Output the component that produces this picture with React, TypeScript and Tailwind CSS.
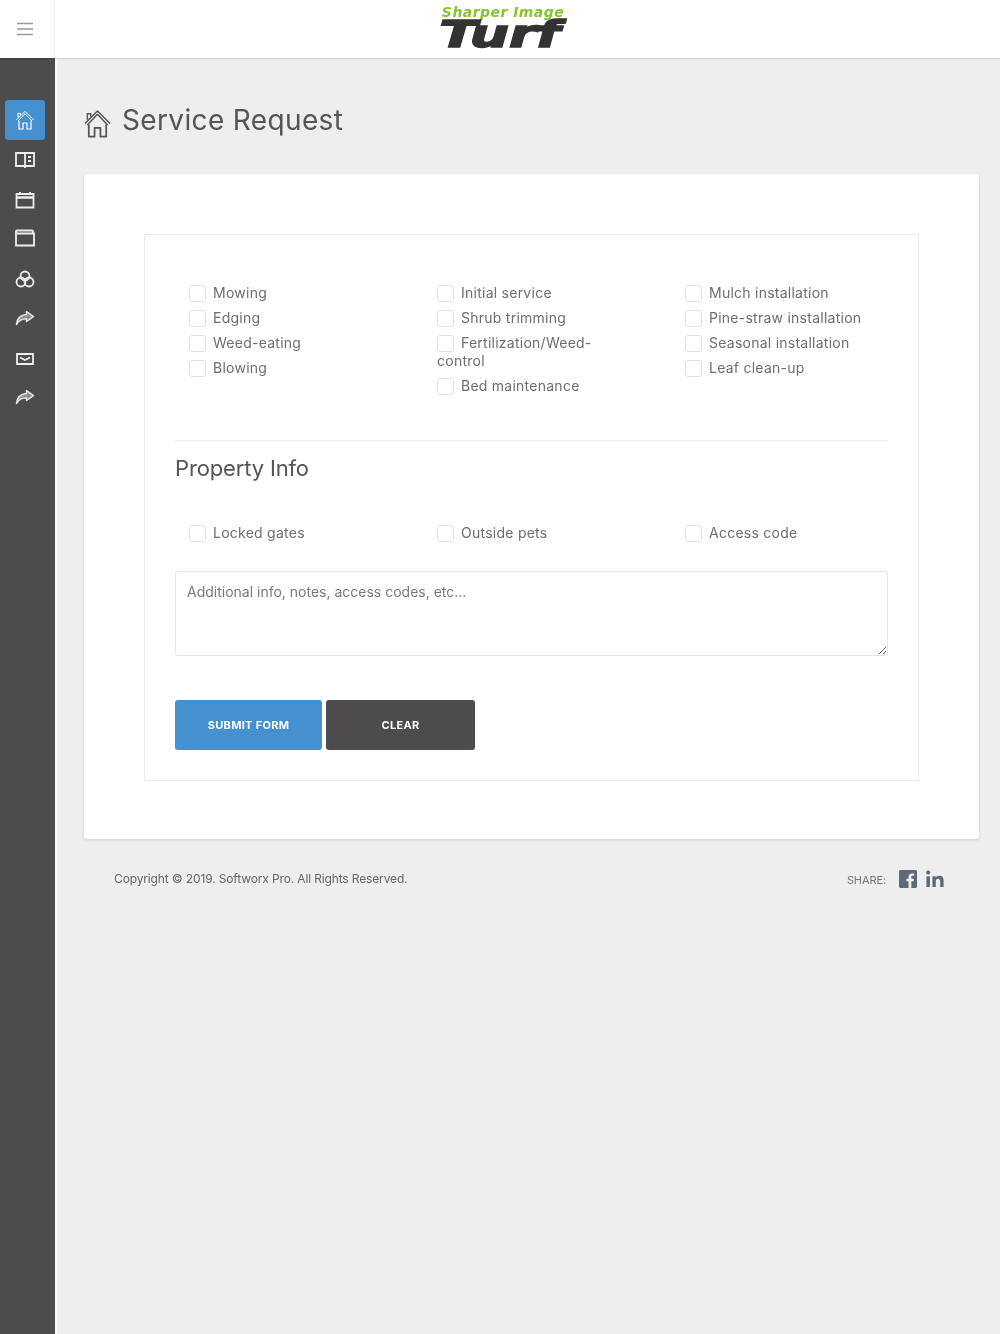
import React from 'react';

const columns = [
  ['Mowing', 'Edging', 'Weed-eating', 'Blowing'],
  ['Initial service', 'Shrub trimming', 'Fertilization/Weed-control', 'Bed maintenance'],
  ['Mulch installation', 'Pine-straw installation', 'Seasonal installation', 'Leaf clean-up'],
];

const propertyOptions = ['Locked gates', 'Outside pets', 'Access code'];

function Check({ label }: { label: string }) {
  return (
    <label className="block text-[14px] leading-[18px] text-[#6f6d6d] tracking-[0.25px] mb-[7px]">
      <span className="inline-block w-[17px] h-[17px] rounded-[3px] border border-[#dfe2e6] bg-white align-[-4px] mr-[7px]" />
      {label.includes('/') ? (
        <>
          Fertilization/Weed-
          <br />
          control
        </>
      ) : (
        label
      )}
    </label>
  );
}

function HomeIcon({ size, color }: { size: number; color: string }) {
  return (
    <svg width={size} height={size} viewBox="0 0 28 30" fill="none" stroke={color} strokeWidth="1.5" strokeLinejoin="round">
      <path d="M1 15 14 2l13 13" />
      <path d="M3.500 16.500 14 5.500l10.500 11" />
      <path d="M5 16v12.500h6v-9h6v9h6V16" strokeWidth="1.800" />
      <path d="M3.500 11V5h3.500v3" />
    </svg>
  );
}

function ShareIcon() {
  return (
    <svg width="20" height="16" viewBox="0 0 20 16" fill="#8f8e8e" stroke="#e8e8e8" strokeWidth="1.500" strokeLinejoin="round">
      <path d="M11.500 1.500 18.500 6.600 11.500 11.500V8.800C6.800 8.800 3.800 10.400 1.500 14.500c.4-5.700 4-9.500 10-10z" />
    </svg>
  );
}

function SideIcons() {
  const stroke = '#eeeeee';
  return (
    <nav className="flex flex-col items-center pt-[42px] w-[50px]">
      <div className="w-[40px] h-[40px] rounded-[3px] bg-[#4590cf] flex items-center justify-center">
        <HomeIcon size={20} color="#ffffff" />
      </div>
      <div className="h-[40px] flex items-center">
        <svg width="20" height="18" viewBox="0 0 20 18" fill="none" stroke={stroke} strokeWidth="1.800">
          <path d="M1 2h18v13H1z" />
          <path d="M10 2v15M13 6h3M13 10h3" />
        </svg>
      </div>
      <div className="h-[40px] flex items-center">
        <svg width="20" height="18" viewBox="0 0 20 18" fill="none" stroke={stroke} strokeWidth="1.800">
          <path d="M1.500 3h17v13.500h-17z" />
          <path d="M1.500 6.500h17" strokeWidth="2.500" />
          <path d="M5 1v2M15 1v2" />
        </svg>
      </div>
      <div className="h-[36px] flex items-center">
        <svg width="20" height="18" viewBox="0 0 20 18" fill="none" stroke={stroke} strokeWidth="1.800">
          <path d="M1 4.500V2.500q0-1 1-1h15q1 0 1 1v2" />
          <path d="M1 4.500h18v12H1z" />
        </svg>
      </div>
      <div className="h-[46px] flex items-center">
        <svg width="20" height="18" viewBox="0 0 20 18" fill="none" stroke={stroke} strokeWidth="1.800">
          <circle cx="10" cy="6" r="4.500" />
          <circle cx="6" cy="12" r="4.500" />
          <circle cx="14" cy="12" r="4.500" />
        </svg>
      </div>
      <div className="h-[32px] flex items-center">
        <ShareIcon />
      </div>
      <div className="h-[50px] flex items-center">
        <svg width="18" height="12" viewBox="0 0 18 12" fill="none" stroke={stroke} strokeWidth="1.800">
          <path d="M1 1h16v10H1z" />
          <path d="M4 4.500 9 7l5-2.500" />
        </svg>
      </div>
      <div className="h-[26px] flex items-center">
        <ShareIcon />
      </div>
    </nav>
  );
}

export default function App() {
  return (
    <div className="min-h-[1334px] flex flex-col bg-[#eeeeee] font-['Inter',sans-serif] blur-[0.4px]">
      <header className="h-[58px] flex bg-white shadow-[0_1px_2px_rgba(0,0,0,0.14)] relative">
        <div className="w-[55px] border-r border-[#e9edf2] flex items-center justify-center pr-[5px]">
          <svg width="16" height="14" viewBox="0 0 16 14" stroke="#9a9a9a" strokeWidth="1.600">
            <path d="M0 1.500h16M0 7h16M0 12.500h16" />
          </svg>
        </div>
        <div className="flex-1 flex justify-center pr-[49px]">
          <div className="flex flex-col items-center italic font-bold select-none font-['DejaVu_Sans',sans-serif]">
            <span className="text-[#86c52c] text-[14px] leading-[12px] mt-[6px] tracking-[0.45px]">
              Sharper Image
            </span>
            <span className="text-[#333333] text-[38px] leading-[30px] mt-[1px] -ml-[6px] scale-x-[1.45] [-webkit-text-stroke:1.5px_#333333]">
              Turf
            </span>
          </div>
        </div>
      </header>

      <div className="flex-1 flex">
        <aside className="w-[57px] pr-[2px] shrink-0 bg-[#4d4b4b] border-r-2 border-[#fafafa]">
          <SideIcons />
        </aside>
        <main className="flex-1 min-w-0 pl-[27px] pr-[21px]">
          <div className="flex items-center h-[116px] pt-[8px] gap-[10px]">
            <span className="mt-[6px] -ml-[1px]">
              <HomeIcon size={29} color="#555555" />
            </span>
            <h1 className="text-[28px] font-normal text-[#565454] tracking-[0.36px]">Service Request</h1>
          </div>

          <section className="bg-white rounded-[3px] shadow-[0_1px_3px_rgba(0,0,0,0.14)] pl-[60px] pr-[60px] py-[60px] pb-[58px]">
            <div className="border border-[#e9ebee] px-[30px] pt-[49px] pb-[30px] h-[547px]">
              <div className="grid grid-cols-[248px_248px_1fr] -mx-[15px] h-[156px]">
                {columns.map((col) => (
                  <div key={col[0]} className="pl-[29px] pr-[15px]">
                    {col.map((item) => (
                      <Check key={item} label={item} />
                    ))}
                  </div>
                ))}
              </div>

              <div className="border-t border-[#ebedf0] pt-[12px]">
                <h2 className="text-[22px] leading-[30px] font-normal text-[#565454] tracking-[-0.15px]">Property Info</h2>
              </div>

              <div className="grid grid-cols-[248px_248px_1fr] -mx-[15px] mt-[41px]">
                {propertyOptions.map((item) => (
                  <div key={item} className="pl-[29px] pr-[15px]">
                    <Check label={item} />
                  </div>
                ))}
              </div>

              <textarea
                className="block w-full h-[85px] mt-[22px] border border-[#e4e7ea] rounded-[3px] px-[11px] py-[11px] text-[14px] leading-[18px] tracking-[0px] text-[#6f6d6d] placeholder:text-[#7b7979] outline-none"
                placeholder="Additional info, notes, access codes, etc..."
              />

              <div className="flex gap-[4px] mt-[44px]">
                <button className="w-[147px] h-[50px] rounded-[3px] bg-[#4590cf] text-white text-[11px] font-bold tracking-[0.3px]">
                  SUBMIT FORM
                </button>
                <button className="w-[149px] h-[50px] rounded-[3px] bg-[#4d4b4b] text-white text-[11px] font-bold tracking-[0.3px]">
                  CLEAR
                </button>
              </div>
            </div>
          </section>

          <footer className="flex items-center justify-between pl-[30px] pr-[35px] mt-[30px]">
            <span className="text-[12px] text-[#666464] tracking-[-0.14px]">Copyright © 2019. Softworx Pro. All Rights Reserved.</span>
            <div className="flex items-center">
              <span className="text-[11px] text-[#777575] mr-[13px] mt-[3px] tracking-[-0.1px]">SHARE:</span>
              <svg width="18" height="18" viewBox="0 0 19 19" className="mr-[9px]">
                <rect width="19" height="19" rx="1.500" fill="#5d6978" />
                <path d="M13 19v-7h2.400l.4-2.800H13V7.500c0-.8.3-1.300 1.400-1.300H16V3.700c-.3 0-1.200-.1-2.200-.1-2.200 0-3.700 1.300-3.700 3.700v1.900H7.700V12h2.400v7z" fill="#eeeeee" />
              </svg>
              <svg width="18" height="18" viewBox="0 0 19 19" fill="#5d6978">
                <circle cx="2.300" cy="2.600" r="2.200" />
                <path d="M.5 6.500h3.600V18H.5zM6.800 6.500h3.400v1.600c.7-1.100 2-1.900 3.800-1.900 3.500 0 4.600 2.200 4.600 5.500V18H15v-5.600c0-1.600-.4-3.100-2.200-3.100-1.900 0-2.500 1.400-2.500 3.100V18H6.800z" />
              </svg>
            </div>
          </footer>
        </main>
      </div>
    </div>
  );
}
